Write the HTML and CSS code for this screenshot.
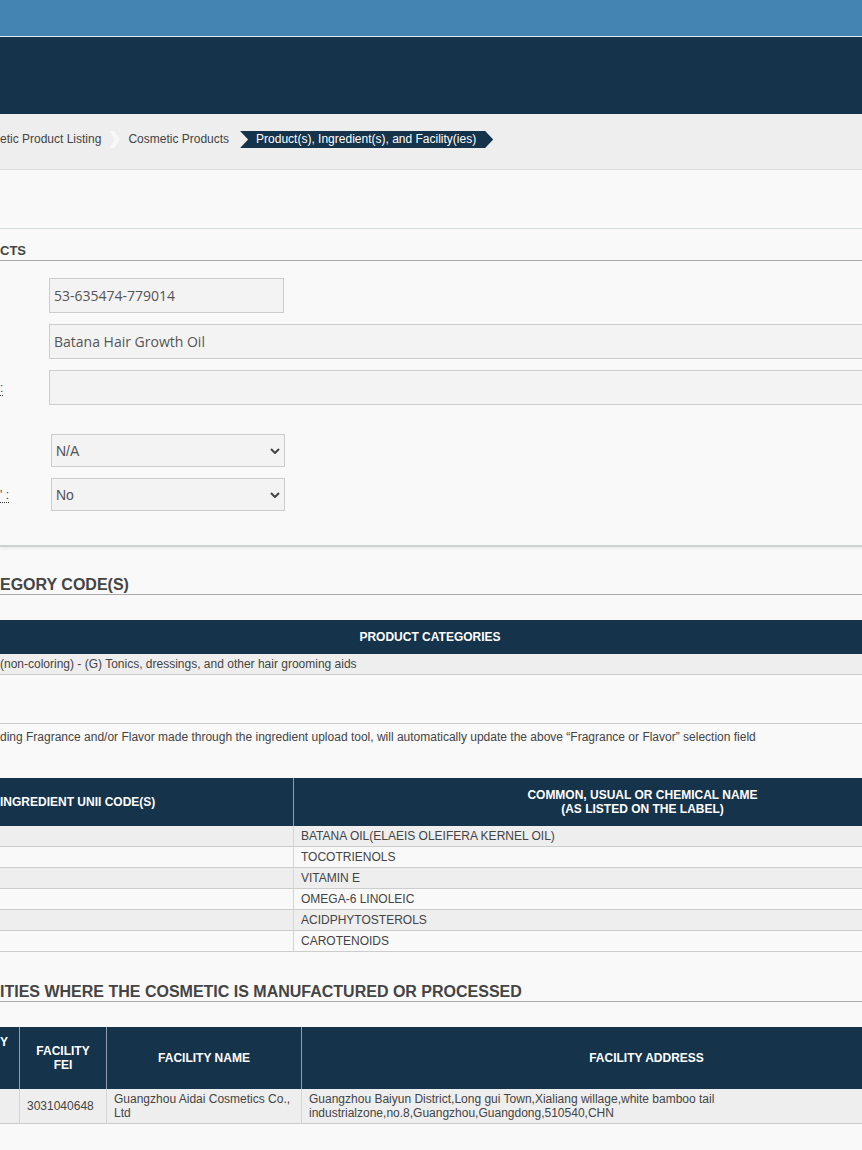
FILE: index.html
```html
<!DOCTYPE html>
<html lang="en">
<head>
    <meta charset="UTF-8">
    <meta name="viewport" content="width=device-width, initial-scale=1.0">
    <title>Product(s), Ingredient(s), and Facility(ies)</title>
    <link rel="stylesheet" href="styles.css">
</head>
<body>
    <header class="site-header">
        <div class="top-strip"></div>
        <div class="brand-bar"></div>
        <nav class="crumbs">
            <span class="crumb">etic Product Listing</span>
            <span class="crumb-sep">
                <svg width="27" height="17" viewBox="0 0 27 17"><polygon points="8,0 13,0 19,8.5 13,17 8,17 14,8.5" fill="#f8f8f8"/></svg>
            </span>
            <span class="crumb">Cosmetic Products</span>
            <span class="crumb current">Product(s), Ingredient(s), and Facility(ies)</span>
        </nav>
    </header>

    <main class="page">
        <div class="page-top"></div>

        <section class="panel">
            <h2 class="section-title small">CTS</h2>
            <div class="form">
                <div class="field">
                    <span class="label"></span>
                    <input class="text-input short" type="text" value="53-635474-779014" readonly>
                </div>
                <div class="field">
                    <span class="label"></span>
                    <input class="text-input" type="text" value="Batana Hair Growth Oil" readonly>
                </div>
                <div class="field">
                    <span class="label"><span class="hint">:</span></span>
                    <input class="text-input" type="text" value="" readonly>
                </div>
                <div class="field select-field first-select">
                    <span class="label"></span>
                    <div class="select-wrap">
                        <select class="select-input">
                            <option>N/A</option>
                        </select>
                        <svg class="select-arrow" width="10" height="6" viewBox="0 0 10 6"><polyline points="1,1 5,5 9,1" fill="none" stroke="#444" stroke-width="2"/></svg>
                    </div>
                </div>
                <div class="field select-field">
                    <span class="label"><span class="hint">' :</span></span>
                    <div class="select-wrap">
                        <select class="select-input">
                            <option>No</option>
                        </select>
                        <svg class="select-arrow" width="10" height="6" viewBox="0 0 10 6"><polyline points="1,1 5,5 9,1" fill="none" stroke="#444" stroke-width="2"/></svg>
                    </div>
                </div>
            </div>
        </section>

        <h2 class="section-title">EGORY CODE(S)</h2>
        <table class="data-table categories">
            <thead>
                <tr><th class="shift-center">PRODUCT CATEGORIES</th></tr>
            </thead>
            <tbody>
                <tr class="odd"><td class="flush">(non-coloring) - (G) Tonics, dressings, and other hair grooming aids</td></tr>
            </tbody>
        </table>

        <p class="note">ding Fragrance and/or Flavor made through the ingredient upload tool, will automatically update the above “Fragrance or Flavor” selection field</p>

        <table class="data-table ingredients">
            <colgroup>
                <col style="width: 293px">
                <col>
            </colgroup>
            <thead>
                <tr>
                    <th class="flush left">INGREDIENT UNII CODE(S)</th>
                    <th class="divided">COMMON, USUAL OR CHEMICAL NAME<br>(AS LISTED ON THE LABEL)</th>
                </tr>
            </thead>
            <tbody>
                <tr class="odd"><td></td><td class="divided">BATANA OIL(ELAEIS OLEIFERA KERNEL OIL)</td></tr>
                <tr><td></td><td class="divided">TOCOTRIENOLS</td></tr>
                <tr class="odd"><td></td><td class="divided">VITAMIN E</td></tr>
                <tr><td></td><td class="divided">OMEGA-6 LINOLEIC</td></tr>
                <tr class="odd"><td></td><td class="divided">ACIDPHYTOSTEROLS</td></tr>
                <tr><td></td><td class="divided">CAROTENOIDS</td></tr>
            </tbody>
        </table>

        <h2 class="section-title facilities-title">ITIES WHERE THE COSMETIC IS MANUFACTURED OR PROCESSED</h2>
        <table class="data-table facilities">
            <colgroup>
                <col style="width: 19px">
                <col style="width: 87px">
                <col style="width: 195px">
                <col>
            </colgroup>
            <thead>
                <tr>
                    <th class="flush left top">Y<br>&nbsp;<br>&nbsp;</th>
                    <th class="divided">FACILITY FEI</th>
                    <th class="divided">FACILITY NAME</th>
                    <th class="divided">FACILITY ADDRESS</th>
                </tr>
            </thead>
            <tbody>
                <tr class="odd">
                    <td></td>
                    <td class="divided">3031040648</td>
                    <td class="divided">Guangzhou Aidai Cosmetics Co., Ltd</td>
                    <td class="divided">Guangzhou Baiyun District,Long gui Town,Xialiang willage,white bamboo tail industrialzone,no.8,Guangzhou,Guangdong,510540,CHN</td>
                </tr>
            </tbody>
        </table>
    </main>
</body>
</html>
```

FILE: styles.css
```css
html, body {
    overflow: hidden;
}
body {
    margin: 0;
    font-family: "Liberation Sans", Arial, sans-serif;
    font-size: 12px;
    color: #444;
    background-color: #f9f9f9;
}

/* header */
.top-strip {
    height: 36px;
    background-color: #4484b3;
    border-bottom: 1px solid #e2eaf1;
}
.brand-bar {
    height: 77px;
    background-color: #15334b;
}
.crumbs {
    height: 56px;
    box-sizing: border-box;
    padding-top: 17px;
    display: flex;
    align-items: flex-start;
    background-color: #eeeeee;
    border-bottom: 1px solid #dddddd;
}
.crumb {
    height: 17px;
    line-height: 17px;
    white-space: nowrap;
}
.crumb-sep {
    height: 17px;
    display: flex;
}
.crumb.current {
    margin-left: 11px;
    padding: 0 17px 0 16px;
    background-color: #15334b;
    color: #fff;
    clip-path: polygon(0 0, calc(100% - 8px) 0, 100% 50%, calc(100% - 8px) 100%, 0 100%, 8px 50%);
}

/* page */
.page {
    width: 991px;
}
.page-top {
    height: 58px;
    border-bottom: 1px solid #d4dfe0;
}
.panel {
    padding-bottom: 34px;
    border-bottom: 2px solid #cbd2d2;
    box-shadow: 0 2px 3px rgba(0, 0, 0, 0.06);
}
.section-title {
    margin: 29px 0 0;
    font-size: 16px;
    line-height: 18px;
    font-weight: bold;
    color: #444;
    border-bottom: 1px solid #aaa;
    white-space: nowrap;
}
.section-title.small {
    margin-top: 14px;
    font-size: 13px;
    line-height: 16px;
    padding-bottom: 1px;
}
.facilities-title {
    margin-top: 31px;
}

/* form */
.form {
    margin-top: 17px;
}
.field {
    display: grid;
    grid-template-columns: 49px 1fr;
    margin-bottom: 11px;
}
.field:last-child {
    margin-bottom: 0;
}
.first-select {
    margin-top: 29px;
}
.label {
    overflow: hidden;
    display: flex;
    align-items: center;
    font-size: 12px;
}
.hint {
    margin-top: 2px;
    border-bottom: 1px dotted #333;
    line-height: 13px;
    white-space: nowrap;
}
.text-input {
    box-sizing: border-box;
    height: 35px;
    width: 100%;
    padding: 0 4px;
    font-family: "Open Sans", "Liberation Sans", sans-serif;
    font-size: 14px;
    color: #555;
    background-color: #f3f3f3;
    border: 1px solid #cccccc;
    outline: none;
}
.text-input.short {
    width: 235px;
}
.select-field {
    grid-template-columns: 51px 1fr;
}
.select-wrap {
    position: relative;
    width: 234px;
}
.select-input {
    appearance: none;
    -webkit-appearance: none;
    box-sizing: border-box;
    width: 234px;
    height: 33px;
    padding: 0 4px;
    font-family: "Liberation Sans", Arial, sans-serif;
    font-size: 14px;
    color: #555;
    background-color: #f3f3f3;
    border: 1px solid #cccccc;
    border-radius: 0;
}
.select-arrow {
    position: absolute;
    right: 5px;
    top: 14px;
}

/* tables */
.data-table {
    width: 991px;
    table-layout: fixed;
    border-collapse: separate;
    border-spacing: 0;
    margin-top: 25px;
}
.data-table th {
    background-color: #15334b;
    color: #fff;
    font-weight: bold;
    font-size: 12px;
    line-height: 14px;
    padding: 10px 7px;
    text-align: center;
    vertical-align: middle;
}
.data-table td {
    padding: 3px 7px;
    line-height: 14px;
    vertical-align: middle;
    border-bottom: 1px solid #cccccc;
    background-color: #f9f9f9;
}
.data-table tr.odd td {
    background-color: #eeeeee;
}
.data-table th.divided {
    border-left: 1px solid #8f9ead;
}
.data-table td.divided {
    border-left: 1px solid #d4d4d4;
}
.data-table .flush {
    padding-left: 0;
}
.data-table th.left {
    text-align: left;
}
.data-table th.top {
    vertical-align: top;
    padding-top: 8px;
    padding-bottom: 12px;
}
.shift-center {
    padding-right: 138px !important;
}
.ingredients {
    margin-top: 34px;
}
.note {
    margin: 48px 0 0;
    padding-top: 6px;
    border-top: 1px solid #cccccc;
    line-height: 14px;
    white-space: nowrap;
}
```
